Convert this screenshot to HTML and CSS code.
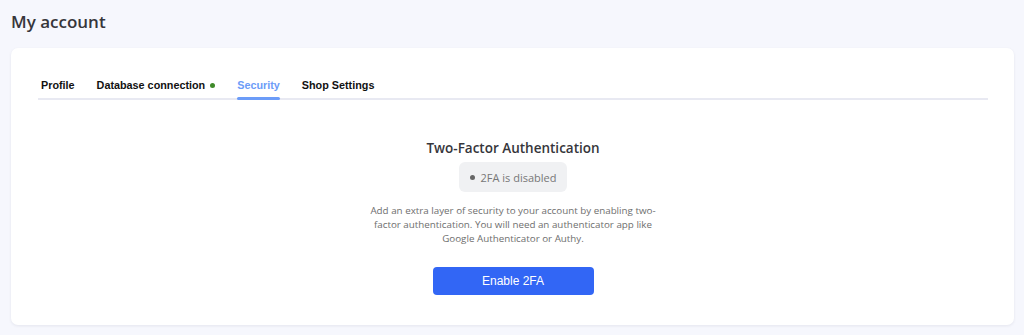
FILE: index.html
```html
<!DOCTYPE html>
<html>
<head>
<meta charset="utf-8">
<link rel="stylesheet" href="styles.css">
</head>
<body>
<div class="page">
  <h1 class="page-title">My account</h1>
  <div class="card">
    <nav class="tabs">
      <span class="tab">Profile</span>
      <span class="tab">Database connection <span class="status-dot"></span></span>
      <span class="tab active">Security</span>
      <span class="tab">Shop Settings</span>
    </nav>
    <section class="twofa">
      <h2 class="twofa-title">Two-Factor Authentication</h2>
      <div class="badge"><span class="badge-dot"></span>2FA is disabled</div>
      <p class="twofa-desc">Add an extra layer of security to your account by enabling two-factor authentication. You will need an authenticator app like Google Authenticator or Authy.</p>
      <button class="btn-primary">Enable 2FA</button>
    </section>
  </div>
</div>
</body>
</html>
```

FILE: styles.css
```css
* { box-sizing: border-box; }
html, body { margin: 0; padding: 0; }
body {
  background: #f6f7fd;
  font-family: "Open Sans", "Liberation Sans", sans-serif;
  color: #333;
}
.page {
  padding: 9px 10px 10px 11px;
}
.page-title {
  margin: 0;
  font-size: 17px;
  font-weight: 600;
  color: #36363b;
  line-height: 26px;
  height: 39px;
}
.card {
  background: #fff;
  border-radius: 7px;
  box-shadow: 0 1px 3px rgba(20, 20, 60, 0.08);
  padding: 27px 26px 28px 27px;
  height: 277px;
}
.tabs {
  display: flex;
  border-bottom: 2px solid #e8e9f2;
  font-family: "Liberation Sans", Arial, sans-serif;
  font-weight: 700;
  font-size: 10.8px;
  color: #111;
  padding-left: 3px;
}
.tab {
  display: flex;
  align-items: center;
  padding: 4px 0 7px;
  margin-right: 22px;
  position: relative;
  line-height: 12px;
}
.tab.active {
  color: #6c9cf8;
}
.tab.active::after {
  content: "";
  position: absolute;
  left: 0;
  right: 0;
  bottom: -2px;
  height: 3px;
  border-radius: 2px;
  background: #6c9cf8;
}
.status-dot {
  width: 5px;
  height: 5px;
  border-radius: 50%;
  background: #3f8a2a;
  margin-left: 5px;
}
.twofa {
  display: flex;
  flex-direction: column;
  align-items: center;
  padding-top: 39px;
}
.twofa-title {
  margin: 0;
  font-size: 13.5px;
  font-weight: 600;
  color: #36363b;
  line-height: 18px;
}
.badge {
  margin-top: 5px;
  display: flex;
  align-items: center;
  height: 30px;
  padding: 0 11px;
  background: #f0f1f3;
  border-radius: 6px;
  font-size: 11px;
  color: #777;
}
.badge-dot {
  width: 5px;
  height: 5px;
  border-radius: 50%;
  background: #666;
  margin-right: 6px;
}
.twofa-desc {
  margin: 12px 0 0;
  width: 296px;
  text-align: center;
  font-size: 9.8px;
  line-height: 14px;
  color: #6e6e6e;
}
.btn-primary {
  margin-top: 21px;
  width: 161px;
  height: 28px;
  border: none;
  border-radius: 4px;
  background: #3266f5;
  color: #fff;
  font-family: "Liberation Sans", Arial, sans-serif;
  font-size: 12px;
}
```
